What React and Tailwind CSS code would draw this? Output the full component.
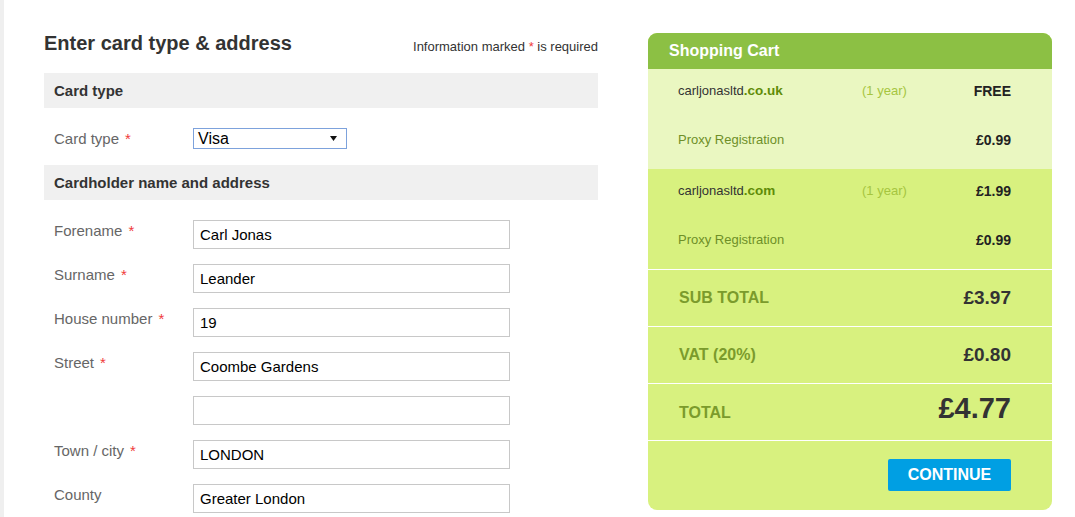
import React from 'react';

const fields = [
  { label: 'Forename', required: true, value: 'Carl Jonas' },
  { label: 'Surname', required: true, value: 'Leander' },
  { label: 'House number', required: true, value: '19' },
  { label: 'Street', required: true, value: 'Coombe Gardens' },
  { label: '', required: false, value: '' },
  { label: 'Town / city', required: true, value: 'LONDON' },
  { label: 'County', required: false, value: 'Greater London' },
];

const cartItems = [
  { name: 'carljonasltd', tld: '.co.uk', term: '(1 year)', price: 'FREE', proxy: '£0.99', bg: 'bg-[#eaf7c1]' },
  { name: 'carljonasltd', tld: '.com', term: '(1 year)', price: '£1.99', proxy: '£0.99', bg: 'bg-[#d8f17f]' },
];

function Required() {
  return <span className="text-[#f03a3a] ml-[6px]">*</span>;
}

function SectionHeader({ children }) {
  return (
    <div className="h-[35px] bg-[#f0f0f0] flex items-center pl-[10px] pt-[1px] text-[15px] font-bold text-[#333]">
      {children}
    </div>
  );
}

function CardForm() {
  return (
    <div className="w-[554px] shrink-0">
      <div className="h-[40px] flex justify-between items-start">
        <h1 className="text-[20px] leading-[20px] font-bold text-[#333]">Enter card type &amp; address</h1>
        <p className="mt-[8px] text-[13px] leading-[12px] text-[#333]">
          Information marked <span className="text-[#f03a3a]">*</span> is required
        </p>
      </div>

      <SectionHeader>Card type</SectionHeader>
      <div className="flex items-center pt-[20px] pb-[16px]">
        <div className="w-[149px] pl-[10px] text-[15px] leading-[20px] text-[#666]">
          Card type<Required />
        </div>
        <div className="w-[154px] h-[21px] border border-[#7da2dc] flex items-center justify-between pl-[4px] pr-[9px] text-[16px] text-black">
          <span>Visa</span>
          <svg width="7" height="5" viewBox="0 0 7 5">
            <path d="M0 0 H7 L3.5 5 Z" fill="#111" />
          </svg>
        </div>
      </div>

      <SectionHeader>Cardholder name and address</SectionHeader>
      <div className="pt-[20px] flex flex-col gap-[15px]">
        {fields.map((f, i) => (
          <div key={i} className="flex items-start h-[29px]">
            <div className="w-[149px] pl-[10px] pt-[1px] text-[15px] leading-[20px] text-[#666]">
              {f.label}
              {f.required && <Required />}
            </div>
            <input
              readOnly
              value={f.value}
              className="w-[317px] h-[29px] border border-[#c8c8c8] pl-[6px] text-[15px] text-black outline-none"
            />
          </div>
        ))}
      </div>
    </div>
  );
}

function TotalRow({ label, value, big }) {
  return (
    <div className="h-[57px] border-t border-white flex items-center justify-between pl-[31px] pr-[41px]">
      <span className={`${big ? 'mt-[2px]' : ''} text-[16px] font-bold text-[#7b9b2c]`}>{label}</span>
      <span className={`${big ? 'text-[29px] mb-[6px]' : 'text-[19px]'} font-bold text-[#333]`}>{value}</span>
    </div>
  );
}

function ShoppingCart() {
  return (
    <div className="ml-[50px] w-[404px] h-[477px] shrink-0 rounded-[9px] overflow-hidden bg-[#d8f17f] flex flex-col">
      <div className="h-[36px] bg-[#8cc044] flex items-center pl-[21px] text-[16px] font-bold text-white">
        Shopping Cart
      </div>

      {cartItems.map((item, i) => (
        <div key={i} className={`${item.bg} h-[100px] pt-[12px] pl-[30px] pr-[41px]`}>
          <div className="h-[20px] flex items-center text-[13px]">
            <span className="w-[184px] text-[#333]">
              {item.name}
              <span className="font-bold text-[#5f8c08] text-[13.5px]">{item.tld}</span>
            </span>
            <span className="flex-1 text-[#a6c53f]">{item.term}</span>
            <span className="text-[14px] font-bold text-[#222]">{item.price}</span>
          </div>
          <div className="h-[20px] mt-[29px] flex items-center justify-between text-[13px]">
            <span className="text-[#6e8f28]">Proxy Registration</span>
            <span className="text-[14px] font-bold text-[#222]">{item.proxy}</span>
          </div>
        </div>
      ))}

      <TotalRow label="SUB TOTAL" value="£3.97" />
      <TotalRow label="VAT (20%)" value="£0.80" />
      <TotalRow label="TOTAL" value="£4.77" big />
      <div className="border-t border-white flex justify-end pr-[41px] pt-[18px]">
        <button className="w-[123px] h-[32px] bg-[#009fe3] rounded-[2px] text-white text-[16px] font-bold">
          CONTINUE
        </button>
      </div>
    </div>
  );
}

export default function App() {
  return (
    <div className="h-[517px] overflow-hidden bg-white flex font-['Liberation_Sans',Arial,sans-serif]">
      <div className="w-[4px] shrink-0 bg-[#efefef]" />
      <div className="flex pl-[40px] pt-[33px]">
        <CardForm />
        <ShoppingCart />
      </div>
    </div>
  );
}
